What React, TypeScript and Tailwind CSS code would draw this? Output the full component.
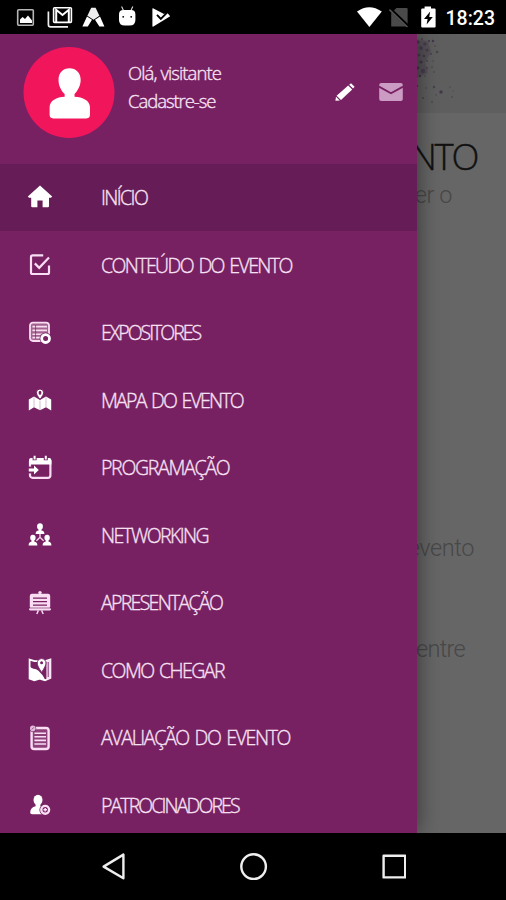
import React from 'react';

const PURPLE = '#772163';

const HomeIcon = () => (
    <svg viewBox="0 0 24 24" className="h-6 w-6 overflow-visible" fill="#fff">
        <path d="M12 .6 24.2 11.4 23 12.8H21V21.2Q21 22.2 20 22.2H14.6V15.6H9.4V22.2H4.2Q3.2 22.2 3.2 21.2V12.8H1L-.2 11.4Z" />
    </svg>
);

const CheckIcon = () => (
    <svg viewBox="0 0 24 24" className="h-6 w-6" fill="none" stroke="#f8ddf3" strokeWidth="2.2">
        <path d="M15.2 2.4H4.6Q3 2.4 3 4V19.4Q3 21 4.6 21H19.4Q21 21 21 19.4V12.4" />
        <path d="m6.8 10.4 4.4 4.4L21 4.4" />
    </svg>
);

const ListIcon = () => (
    <svg viewBox="0 0 24 24" className="h-6 w-6 overflow-visible">
        <rect x="2" y="1.6" width="19" height="18.4" rx="3" fill="#a5648f" stroke="#f8ddf3" strokeWidth="1.8" />
        <path d="M4.4 5.6H19M4.4 9.4H19M4.4 13.2H15M4.4 16.6H13" stroke="#f8ddf3" strokeWidth="1.6" />
        <path d="M7.6 4V18" stroke={PURPLE} strokeWidth=".7" />
        <circle cx="17.6" cy="17.6" r="6" fill={PURPLE} />
        <circle cx="17.6" cy="17.6" r="3.9" fill={PURPLE} stroke="#fff" strokeWidth="2.8" />
    </svg>
);

const MapIcon = () => (
    <svg viewBox="0 0 24 24" className="h-6 w-6 overflow-visible">
        <path d="M.8 11.6 6 8.6 12 12l6-3.4 5.2 3V22.6L18 19.2l-6 3-6-3-5.2 3.4Z" fill="#fff" />
        <path d="M6 9.4V19M12 12.6V22M18 9.4V19" stroke={PURPLE} strokeWidth=".5" opacity=".6" />
        <path d="M12 11.4C9.6 8.4 8.4 6.4 8.4 4.6a3.6 3.6 0 0 1 7.2 0c0 1.8-1.2 3.8-3.6 6.8Z" fill="#fff" stroke={PURPLE} strokeWidth="1" />
        <ellipse cx="12" cy="4.8" rx="1.4" ry="2.1" fill={PURPLE} />
    </svg>
);

const CalendarIcon = () => (
    <svg viewBox="0 0 24 24" className="h-6 w-6 overflow-visible">
        <rect x="2" y="3" width="20.4" height="18.8" rx="2.6" fill="none" stroke="#f8ddf3" strokeWidth="2.2" />
        <path d="M1 8.4V4.4Q1 2 3.4 2H21Q23.4 2 23.4 4.4V8.4Z" fill="#fff" />
        <path d="M6.6-.2V4.2M17.8-.2V4.2" stroke={PURPLE} strokeWidth="4" />
        <path d="M6.6-.2V3.6M17.8-.2V3.6" stroke="#fff" strokeWidth="2" />
        <path d="M0 10.6H3.2V17.4H0Z" fill={PURPLE} />
        <path d="M.8 12.4H6V9.6L10.8 14 6 18.4V15.6H.8Z" fill="#fff" />
    </svg>
);

const NetworkIcon = () => (
    <svg viewBox="0 0 24 24" className="h-6 w-6 overflow-visible" fill="#fff">
        <path d="M12 9V14.6M8.4 17.8 12 14.4l3.6 3.4" fill="none" stroke="#f8ddf3" strokeWidth="1.3" />
        <ellipse cx="12" cy="3.4" rx="2.9" ry="3.2" />
        <path d="M10.6 5H13.4V7.6Q16.4 8 16.4 11H7.6Q7.6 8 10.6 7.6Z" />
        <ellipse cx="4.9" cy="14.8" rx="2.7" ry="3" />
        <path d="M3.6 16H6.2V18.6Q9.4 19 9.4 22.4H.6Q.6 19 3.6 18.6Z" />
        <ellipse cx="19.1" cy="14.8" rx="2.7" ry="3" />
        <path d="M17.8 16H20.4V18.6Q23.4 19 23.4 22.4H14.6Q14.6 19 17.8 18.6Z" />
    </svg>
);

const BoardIcon = () => (
    <svg viewBox="0 0 24 24" className="h-6 w-6 overflow-visible" fill="#f8ddf3">
        <circle cx="12" cy="1.6" r="1.7" />
        <rect x="1.8" y="2.8" width="20.4" height="14.8" rx="2.2" />
        <rect x="1.2" y="17" width="21.6" height="2.4" rx="1.2" />
        <path d="M5 7.2H19M5 10.7H19M5 14.2H19" stroke={PURPLE} strokeWidth="1.2" />
        <path d="M2 17H22" stroke={PURPLE} strokeWidth=".6" />
        <path d="M10.4 19.4 8.8 23M13.6 19.4 15.2 23" stroke="#f8ddf3" strokeWidth="1.4" />
    </svg>
);

const RouteIcon = () => (
    <svg viewBox="0 0 24 24" className="h-6 w-6 overflow-visible">
        <path d="M1.6 1.6 6.6 3.2H17.4L22.4 1.6V20L17 22.4 11.6 20.6 6.4 22.4 1.6 20.6Z" fill={PURPLE} stroke="#fff" strokeWidth="1.8" />
        <path d="M1.6 8.4C5 12 9 9.6 11.6 14l3 3.2 3 5.2-6-1.8-5.2 1.8-4.8-2Z" fill="#fff" />
        <path d="M18.4 3V22L22.6 20.2V1.6Z" fill="#f8ddf3" />
        <path d="M20.2 4V19" stroke={PURPLE} strokeWidth=".9" />
        <path d="M13.6 14.4C10.8 10 9.2 7.4 9.2 5a4.4 4.4 0 0 1 8.8 0c0 2.4-1.6 5-4.4 9.4Z" fill="#fff" stroke={PURPLE} strokeWidth=".9" />
        <circle cx="13.6" cy="4.8" r="1.5" fill={PURPLE} />
    </svg>
);

const SheetIcon = () => (
    <svg viewBox="0 0 24 24" className="h-6 w-6 overflow-visible">
        <rect x="3.6" y="2" width="17" height="21" rx="2.6" fill="#8d4079" stroke="#f8ddf3" strokeWidth="2.4" />
        <path d="M6.4 7.2H18M6.4 10.8H18M6.4 14.4H18M6.4 18H18" stroke="#f8ddf3" strokeWidth="1.6" />
        <circle cx="4.8" cy="2.4" r="3.4" fill={PURPLE} />
        <circle cx="4.8" cy="2.4" r="2.8" fill="#e3b9d9" />
        <path d="m3.8 3.4 2-2" stroke={PURPLE} strokeWidth=".7" />
    </svg>
);

const SponsorIcon = () => (
    <svg viewBox="0 0 24 24" className="h-6 w-6 overflow-visible">
        <ellipse cx="10" cy="7" rx="4.5" ry="5.2" fill="#fff" />
        <path d="M7.6 9H12.4V13.2Q17.6 14.4 17.6 18V21.2H4Q2.2 21.2 2.2 19.4 2.2 14.4 7.6 13.2Z" fill="#fff" />
        <circle cx="17.2" cy="16.8" r="5.8" fill={PURPLE} />
        <circle cx="17.2" cy="16.8" r="3.9" fill="none" stroke="#f8ddf3" strokeWidth="2.4" />
        <path d="M17.2 15V18.6M15.4 16.8H19" stroke="#f8ddf3" strokeWidth="1.5" />
    </svg>
);

const menuItems = [
    { label: 'INÍCIO', icon: HomeIcon, tracking: 'tracking-[-1.6px]', active: true },
    { label: 'CONTEÚDO DO EVENTO', icon: CheckIcon, tracking: 'tracking-[-1.6px]' },
    { label: 'EXPOSITORES', icon: ListIcon, tracking: 'tracking-[-2px]' },
    { label: 'MAPA DO EVENTO', icon: MapIcon, tracking: 'tracking-[-1.75px]' },
    { label: 'PROGRAMAÇÃO', icon: CalendarIcon, tracking: 'tracking-[-1.3px]' },
    { label: 'NETWORKING', icon: NetworkIcon, tracking: 'tracking-[-1.65px]' },
    { label: 'APRESENTAÇÃO', icon: BoardIcon, tracking: 'tracking-[-1.7px]' },
    { label: 'COMO CHEGAR', icon: RouteIcon, tracking: 'tracking-[-1.55px]' },
    { label: 'AVALIAÇÃO DO EVENTO', icon: SheetIcon, tracking: 'tracking-[-1.35px]' },
    { label: 'PATROCINADORES', icon: SponsorIcon, tracking: 'tracking-[-1.9px]' },
];

const StatusBar: React.FC = () => (
    <header className="flex h-[34px] shrink-0 items-center bg-black pl-4 pr-[11px]">
        <svg viewBox="0 0 160 34" className="h-[34px] w-[160px]">
            {/* Gallery */}
            <rect x="1.7" y="9.7" width="15.6" height="15.6" rx="1" fill="none" stroke="#b5b5b5" strokeWidth="1.6" />
            <path d="M4 23V19.6L6.6 17l2.4 2 3-3.4 4 5V23Z" fill="#fff" />
            {/* Mail stack */}
            <path d="M32.4 11.4V24.4Q32.4 26.8 34.6 26.8H52" fill="none" stroke="#eee" strokeWidth="1.7" />
            <rect x="37.6" y="7.8" width="17.8" height="14.6" rx="1" fill="none" stroke="#fff" strokeWidth="1.6" />
            <path d="M40.2 22V9.8L46.5 15l6.3-5.2V22" fill="none" stroke="#fff" strokeWidth="2" />
            {/* Tent */}
            <path d="M75.2 7.8H79.6L83.4 15.8 77.5 19.8 71.4 15.8Z" fill="#eee" />
            <path d="M71 16.4 76 19.8 71.8 26.6H66.4ZM84 16.4 79 19.8 83.4 26.6H88.4Z" fill="#fff" />
            {/* Droid */}
            <path d="m105.6 6.4 2 4.4M116.8 6.4l-2 4.4" stroke="#ddd" strokeWidth="1.1" />
            <path d="M103 14.4Q103 10 107.4 10H115Q119.4 10 119.4 14.4V20Q119.4 25.6 113.6 25.6H108.8Q103 25.6 103 20Z" fill="#fff" />
            <circle cx="107.2" cy="16.8" r=".9" />
            <circle cx="115.2" cy="16.8" r=".9" />
            {/* Play store */}
            <path d="M137 8.2Q136.4 8 136.4 8.8V26Q136.4 27 137.4 26.6L154.2 16.2 151 12.6 148 14Z" fill="#fff" />
            <path d="m141 14.8 3.8 4 7-7" fill="none" stroke="#000" strokeWidth="1.9" />
        </svg>
        <svg viewBox="0 0 80 34" className="ml-auto h-[34px] w-[80px]">
            <path d="M1 11.6Q13.2 2.8 25.8 11.6L13.4 27Z" fill="#fff" />
            <path d="M40.4 8H50.6Q51.6 8 51.6 9V26.6H35.2V13.2Z" fill="#4a4a4a" />
            <path d="m34 8.8 18 17.4" stroke="#000" strokeWidth="3.2" />
            <path d="m33.4 9.6 18 17.4" stroke="#555" strokeWidth="1.5" />
            <path d="M68.6 6.6H75V8.6H78.6Q79.6 8.6 79.6 9.6V26.4Q79.6 27.4 78.6 27.4H66.2Q65.2 27.4 65.2 26.4V9.6Q65.2 8.6 66.2 8.6H68.6Z" fill="#fff" />
            <path d="M74.2 11.6 68 19H71.6L70.6 24.4 76.8 17H73.2Z" fill="#000" />
        </svg>
        <span className="ml-[8px] w-[51px] whitespace-nowrap pt-[3px] text-right font-['Roboto'] text-[19.5px] font-medium leading-none text-white">18:23</span>
    </header>
);

const Profile: React.FC = () => (
    <div className="flex h-[130px] shrink-0 items-start pl-[23px] pt-3">
        <svg viewBox="0 0 92 92" className="mt-px h-[91px] w-[92px]">
            <circle cx="46" cy="46" r="46" fill="#f1155c" />
            <path d="M46.5 21.4C53 21.4 57.8 26 57.8 33 57.8 39 55 44 51.6 47.4V50.2C60 50.6 67.2 54 67.2 61V68.6Q67.2 72.2 63.6 72.2H30Q26.4 72.2 26.4 68.6V61C26.4 54 33.4 50.6 41.6 50.2V47.4C38 44 35.4 39 35.4 33 35.4 26 40 21.4 46.5 21.4Z" fill="#fff" />
        </svg>
        <div className="ml-[13px] w-[190px] pt-[13px] text-[18.5px] leading-[28px] tracking-[-0.9px] text-[#f8e3f4] [-webkit-text-stroke:0.35px_#f8e3f4]">
            <p>Olá, visitante</p>
            <p className="tracking-[-1.05px]">Cadastre-se</p>
        </div>
        <svg viewBox="0 0 24 24" className="ml-[15px] mt-[34px] h-6 w-6" fill="#fff">
            <path d="M15.2 5.6 19.2 9.6 8 20 3.6 15.8Z" />
            <path d="M16.2 4.8 18 3.2 21.6 6.8 20.1 8.6Z" />
            <path d="M3 16.8 6.8 20.4 2.4 20.8Z" />
        </svg>
        <svg viewBox="0 0 24 18" className="ml-[22px] mt-[37px] h-[18px] w-6">
            <rect x=".2" y="0" width="23.6" height="18" rx="2" fill="#cc9bc3" />
            <path d="M0 3.6 12 10.2 24 3.6" fill="none" stroke={PURPLE} strokeWidth="1.8" />
        </svg>
    </div>
);

const Drawer: React.FC = () => (
    <aside className="absolute inset-y-0 left-0 flex w-[417px] flex-col bg-[#772163] shadow-[0_0_22px_rgba(0,0,0,0.5)]">
        <Profile />
        <nav className="flex flex-col">
            {menuItems.map(({ label, icon: Icon, tracking, active }) => (
                <a key={label} className={`flex h-[67.5px] items-center pl-7 ${active ? 'border-b border-[#772163] bg-[#661c56]' : ''}`}>
                    <Icon />
                    <span className={`ml-[49px] whitespace-nowrap text-[19.5px] text-[#f6e0f2] [word-spacing:2px] [-webkit-text-stroke:0.35px_#f6e0f2] ${tracking}`}>{label}</span>
                </a>
            ))}
        </nav>
    </aside>
);

// Ink specks of the event banner, as [x, y, radius]
const specks = [
    [2, 8, 1.5], [6, 5, 1], [9, 10, 1.8], [13, 7, 1], [5, 14, 2], [11, 16, 1.6], [17, 7, 1.2], [19, 12, .8],
    [3, 21, 1.6], [8, 22, 1.2], [15, 20, 1], [21, 18, 1.2], [5, 28, 1.6], [11, 27, .9], [17, 27, .7], [2, 34, 1.4],
    [7, 37, 2.2], [11, 34, 1], [4, 42, 1.2], [16, 33, .8], [18, 38, .8], [1, 52, 1.1], [10, 54, .7], [18, 53, 1.2],
    [25, 58, 1.7], [20, 61, .7], [7, 64, 1], [16, 68, .8], [34, 53, .7], [37, 57, .6], [36, 63, .7], [9, 42, .8],
];

const EventPage: React.FC = () => (
    <main className="flex h-full flex-col bg-[#666]">
        <div className="h-[79px] shrink-0 bg-[#5f5f5f] pl-[416px]">
            <svg viewBox="0 0 90 79" className="h-[79px] w-[90px]" fill="#43354a">
                <path d="M0 5 12 7 15 18 9 28 12 39 0 44Z" opacity=".3" />
                {specks.map(([x, y, r], i) => <circle key={i} cx={x} cy={y} r={r} opacity={i % 3 ? 0.7 : 0.95} />)}
            </svg>
        </div>
        <h1 className="mt-[20px] h-[46px] whitespace-nowrap pr-[29px] text-right text-[36.5px] leading-[46px] tracking-[-2.3px] text-[#111] [-webkit-text-stroke:0.4px_#111]">EVENTO</h1>
        <p className="mt-px h-[30px] pr-[54px] text-right font-['Roboto'] text-[23.5px] leading-[30px] tracking-[-0.4px] text-[#484848]">saber o</p>
        <p className="mt-[323px] h-[30px] pr-[32px] text-right font-['Roboto'] text-[23.5px] leading-[30px] tracking-[-0.4px] text-[#484848]">evento</p>
        <p className="mt-[71px] h-[30px] pr-[41px] text-right font-['Roboto'] text-[23.5px] leading-[30px] tracking-[-0.7px] text-[#484848]">entre</p>
    </main>
);

const NavBar: React.FC = () => (
    <footer className="flex h-[67px] shrink-0 items-center justify-center bg-black">
        <svg viewBox="0 0 306 67" className="h-[67px] w-[306px]" fill="none" stroke="#eee" strokeWidth="2.4" strokeLinejoin="round">
            <path d="M23.4 21.6V45.2L3.6 33.6Z" />
            <circle cx="153.6" cy="33.6" r="12.3" />
            <rect x="283.6" y="22.8" width="21.6" height="21.6" />
        </svg>
    </footer>
);

const App: React.FC = () => (
    <div className="flex h-[900px] w-[506px] flex-col overflow-hidden bg-black font-['Open_Sans','Noto_Sans',sans-serif] font-light">
        <StatusBar />
        <div className="relative h-[799px] shrink-0 overflow-hidden">
            <EventPage />
            <Drawer />
        </div>
        <NavBar />
    </div>
);

export default App;
